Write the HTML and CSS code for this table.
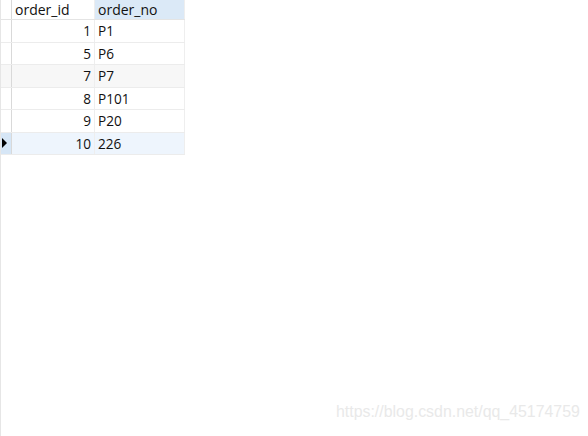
FILE: index.html
```html
<!DOCTYPE html>
<html>
<head>
<meta charset="utf-8">
<link rel="stylesheet" href="styles.css">
</head>
<body>
<div class="page">
  <div class="grid">
    <div class="row head">
      <div class="ind"></div>
      <div class="cell">order_id</div>
      <div class="cell sel">order_no</div>
    </div>
    <div class="row"><div class="ind"></div><div class="cell num">1</div><div class="cell">P1</div></div>
    <div class="row"><div class="ind"></div><div class="cell num">5</div><div class="cell">P6</div></div>
    <div class="row alt"><div class="ind"></div><div class="cell num">7</div><div class="cell">P7</div></div>
    <div class="row"><div class="ind"></div><div class="cell num">8</div><div class="cell">P101</div></div>
    <div class="row"><div class="ind"></div><div class="cell num">9</div><div class="cell">P20</div></div>
    <div class="row cur"><div class="ind"><span class="arrow"></span></div><div class="cell num">10</div><div class="cell">226</div></div>
  </div>
  <div class="mark">https://blog.csdn.net/qq_45174759</div>
</div>
</body>
</html>
```
FILE: styles.css
```css
html, body {
  margin: 0;
  padding: 0;
  background: #ffffff;
}
.page {
  position: relative;
  width: 588px;
  height: 436px;
  border-left: 1px solid #e6e6e6;
  box-sizing: border-box;
  font-family: "Open Sans", "Noto Sans", sans-serif;
  font-size: 13.6px;
  color: #111111;
}
.grid {
  width: 184px;
}
.row {
  display: grid;
  grid-template-columns: 11px 83px 90px;
  height: 22.5px;
  box-sizing: border-box;
  border-bottom: 1px solid #ececec;
}
.row.head {
  height: 20px;
  border-bottom: 1px solid #e4e4e4;
}
.ind {
  border-right: 1px solid #d9d9d9;
  display: flex;
  align-items: center;
  justify-content: center;
}
.cell {
  display: flex;
  align-items: center;
  padding: 0 3px;
  border-right: 1px solid #eeeeee;
  white-space: nowrap;
}
.head .cell {
  padding-left: 3px;
  font-size: 14px;
}
.head .cell.sel {
  background: #dbe9f7;
}
.cell.num {
  justify-content: flex-end;
}
.row.alt {
  background: #f7f7f7;
}
.row.cur {
  background: #eef5fd;
}
.row.cur .ind {
  background: #d6e6f6;
}
.arrow {
  width: 0;
  height: 0;
  border-top: 5px solid transparent;
  border-bottom: 5px solid transparent;
  border-left: 5px solid #000;
  margin-left: -3px;
}
.mark {
  position: absolute;
  left: 335px;
  top: 403px;
  font-family: "Liberation Sans", Arial, sans-serif;
  font-size: 15.9px;
  color: #e9e9e9;
}
```
